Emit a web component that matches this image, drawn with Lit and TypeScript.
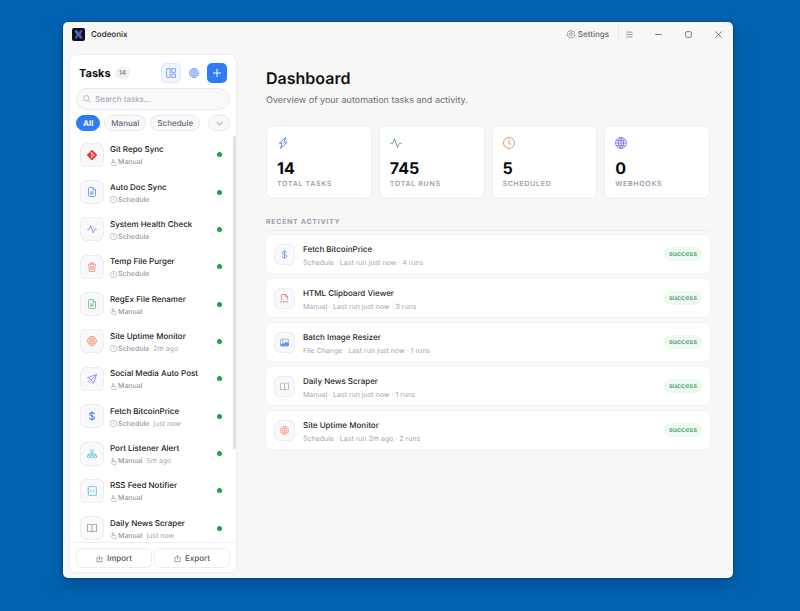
import { LitElement, html, svg, css, nothing } from "lit";
import { customElement, property, state } from "lit/decorators.js";
import { classMap } from "lit/directives/class-map.js";

interface Task {
  name: string;
  trigger: "Manual" | "Schedule";
  icon: string;
  tone: string;
  ago?: string;
}

interface Activity {
  name: string;
  detail: string;
  icon: string;
  tone: string;
}

const TASKS: Task[] = [
  { name: "Git Repo Sync", trigger: "Manual", icon: "git", tone: "red" },
  { name: "Auto Doc Sync", trigger: "Schedule", icon: "file", tone: "blue" },
  { name: "System Health Check", trigger: "Schedule", icon: "pulse", tone: "violet" },
  { name: "Temp File Purger", trigger: "Schedule", icon: "trash", tone: "rose" },
  { name: "RegEx File Renamer", trigger: "Manual", icon: "file", tone: "green" },
  { name: "Site Uptime Monitor", trigger: "Schedule", icon: "globe", tone: "orange", ago: "2m ago" },
  { name: "Social Media Auto Post", trigger: "Manual", icon: "send", tone: "violet" },
  { name: "Fetch BitcoinPrice", trigger: "Schedule", icon: "dollar", tone: "blue", ago: "just now" },
  { name: "Port Listener Alert", trigger: "Manual", icon: "network", tone: "cyan", ago: "5m ago" },
  { name: "RSS Feed Notifier", trigger: "Manual", icon: "journal", tone: "cyan" },
  { name: "Daily News Scraper", trigger: "Manual", icon: "book", tone: "gray", ago: "just now" },
];

const STATS = [
  { value: 14, label: "Total tasks", icon: "bolt", tone: "blue" },
  { value: 745, label: "Total runs", icon: "pulse", tone: "leaf" },
  { value: 5, label: "Scheduled", icon: "clock", tone: "copper" },
  { value: 0, label: "Webhooks", icon: "globe", tone: "purple" },
];

const ACTIVITY: Activity[] = [
  { name: "Fetch BitcoinPrice", detail: "Schedule · Last run just now · 4 runs", icon: "dollar", tone: "blue" },
  { name: "HTML Clipboard Viewer", detail: "Manual · Last run just now · 3 runs", icon: "html", tone: "red" },
  { name: "Batch Image Resizer", detail: "File Change · Last run just now · 1 runs", icon: "image", tone: "blue" },
  { name: "Daily News Scraper", detail: "Manual · Last run just now · 1 runs", icon: "book", tone: "gray" },
  { name: "Site Uptime Monitor", detail: "Schedule · Last run 2m ago · 2 runs", icon: "globe", tone: "orange" },
];

// all glyphs share a 16x16 grid
const GLYPHS: Record<string, unknown> = {
  git: svg`
    <path fill="currentColor" stroke="none" d="M7.1.2a1.3 1.3 0 0 1 1.8 0l6.9 6.9a1.3 1.3 0 0 1 0 1.8l-6.9 6.9a1.3 1.3 0 0 1-1.8 0L.2 8.9a1.3 1.3 0 0 1 0-1.8z"/>
    <path stroke="#fff" stroke-width="1.1" d="M5.4 2.8 7.8 5.2v6M7.8 5.4l2.8 2.8"/>
    <circle cx="7.8" cy="5.2" r="1.1" fill="#fff" stroke="none"/>
    <circle cx="7.8" cy="11.2" r="1.2" fill="#fff" stroke="none"/>
    <circle cx="10.8" cy="8.2" r="1.2" fill="#fff" stroke="none"/>`,
  file: svg`<path d="M9.5.8H4A1.5 1.5 0 0 0 2.5 2.3v11.4A1.5 1.5 0 0 0 4 15.2h8a1.5 1.5 0 0 0 1.5-1.5V4.8zM9.5.8v4h4M5.2 8h5.6M5.2 10h5.6M5.2 12h3"/>`,
  pulse: svg`<path d="M.6 8.5h3L6 2.5l4 11.5 2.4-5.5h3"/>`,
  trash: svg`<path d="M1.5 3.5h13M5.5 3.2V1.5h5v1.7M2.8 3.6l.9 11.6h8.6l.9-11.6M5.8 6l.3 6.8M8 6v6.8M10.2 6l-.3 6.8"/>`,
  globe: svg`<g stroke-width="1"><circle cx="8" cy="8" r="7.3"/><ellipse cx="8" cy="8" rx="3.4" ry="7.3"/><path d="M8 .7v14.6M.7 8h14.6M1.7 4.6h12.6M1.7 11.4h12.6"/></g>`,
  send: svg`<path d="M15.3.7 10.4 15 6.6 9.4.9 5.6zM15.3.7 6.6 9.4M3.6 10.2 1 12.8M5.8 12l-2.4 2.6"/>`,
  dollar: svg`<path stroke-width="1.7" d="M12 4.9C11.7 3.3 10.2 2.6 8.1 2.6 5.7 2.6 4.2 3.7 4.2 5.3c0 1.7 1.5 2.2 3.8 2.7 2.5.5 4.1 1.1 4.1 2.9 0 1.7-1.5 2.7-4 2.7-2.3 0-3.9-.9-4.2-2.7M8 .6v14.8"/>`,
  network: svg`<path d="M8 5.5V8M2.5 10V8h11v2M8 8v2"/><rect x="6" y="1.5" width="4" height="4" rx="1"/><rect x=".8" y="10" width="3.8" height="3.8" rx="1"/><rect x="6.1" y="10" width="3.8" height="3.8" rx="1"/><rect x="11.4" y="10" width="3.8" height="3.8" rx="1"/>`,
  journal: svg`<rect x="2.2" y="1" width="12.8" height="14" rx="1"/><path d="M.8 4.5H3M.8 8H3M.8 11.5H3M7.4 6 5.6 8l1.8 2M10 6l1.8 2L10 10"/>`,
  book: svg`<path d="M8 3.3C6.5 2 3.5 1.8.8 2.6v11c2.7-.7 5.7-.5 7.2.7 1.5-1.2 4.5-1.4 7.2-.7v-11C12.5 1.8 9.5 2 8 3.3zv11"/>`,
  bolt: svg`<path d="M11.5.6 3 8.4h4L4.5 15.4 13.5 7h-4.3z"/>`,
  clock: svg`<circle cx="8" cy="8" r="7.3"/><path d="M8 3.5v5l3 1.8"/>`,
  html: svg`<path d="M2.5 10.5V2.3A1.5 1.5 0 0 1 4 .8h5.5l4 4v5.7M9.5.8v4h4"/><path stroke-width=".7" d="M1 12.5v2.8M1 13.9h2.4M3.4 12.5v2.8M4.8 12.7h2.6M6.1 12.7v2.6M8.8 15.3v-2.8l1.3 1.6 1.3-1.6v2.8M13 12.5v2.7h2"/>`,
  image: svg`<rect x=".8" y="2" width="14.4" height="12" rx="1.5"/><circle cx="4.8" cy="5.6" r="1.4" fill="currentColor" stroke="none"/><path fill="currentColor" d="M1 12.5 5 9l2.5 1.7L11 6.8l4.2 3v3.4a.8.8 0 0 1-.8.8H1.6z"/>`,
  hand: svg`<path d="M5.5 9.5V2a1.2 1.2 0 0 1 2.4 0v5.2l5 .9a1.6 1.6 0 0 1 1.3 1.8l-.8 5.3H6.6L2.3 9.8c.7-1 2-.9 2.7-.1zM10.3 7.6v2M7.9 7.2v2"/>`,
  search: svg`<circle cx="6.5" cy="6.5" r="5.3"/><path d="m10.5 10.5 4.7 4.7"/>`,
  layout: svg`<rect x="1" y="1" width="5.6" height="14"/><rect x="9.4" y="1" width="5.6" height="6"/><rect x="9.4" y="9.8" width="5.6" height="5.2"/>`,
  plus: svg`<path stroke-width="1.6" d="M8 1.5v13M1.5 8h13"/>`,
  chevron: svg`<path stroke-width="1.8" d="m1.5 5 6.5 6 6.5-6"/>`,
  gear: svg`<path d="m6.6.9 2.8 0 .5 1.8 1.8.8 1.7-.8 1.8 2.2-1 1.6.3 1.9 1.3 1.1-.9 2.5-1.9.1-1.3 1.3-.3 1.8H4.6l-.4-1.8-1.3-1.3-1.9-.1-.6-2.5 1.2-1.1.2-1.9-.9-1.6 1.7-2.2 1.7.8 1.8-.8z"/><circle cx="8" cy="8.2" r="2.8"/>`,
  menu: svg`<path stroke-width="1.5" d="M.8 2.5h14.4M.8 8h14.4M.8 13.5h14.4"/>`,
  minimize: svg`<path stroke-width="1.8" d="M.5 8h15"/>`,
  maximize: svg`<rect x="1.5" y="1.5" width="13" height="13" rx="2" stroke-width="1.6"/>`,
  close: svg`<path stroke-width="1.8" d="m1 1 14 14M15 1 1 15"/>`,
  download: svg`<path d="M5 5.5H2v9.7h12V5.5h-3M8 .8v9.7M5.2 7.8 8 10.6l2.8-2.8"/>`,
  upload: svg`<path d="M5 5.5H2v9.7h12V5.5h-3M8 10.5V1M5.2 3.7 8 .9l2.8 2.8"/>`,
};

@customElement("ui-icon")
class UiIcon extends LitElement {
  @property() name = "";

  static styles = css`
    :host {
      display: inline-flex;
      flex: none;
      width: 10px;
      height: 10px;
    }
    svg {
      width: 100%;
      height: 100%;
      fill: none;
      stroke: currentColor;
      stroke-width: 1.2;
      stroke-linejoin: round;
      overflow: visible;
    }
  `;

  render() {
    return html`<svg viewBox="0 0 16 16" aria-hidden="true">${GLYPHS[this.name] ?? nothing}</svg>`;
  }
}

const base = css`
  * {
    box-sizing: border-box;
  }
  h1,
  h2,
  h3,
  p,
  ul {
    margin: 0;
    padding: 0;
    list-style: none;
  }
  button {
    display: flex;
    align-items: center;
    justify-content: center;
    margin: 0;
    padding: 0;
    border: 0;
    background: none;
    color: inherit;
    font: inherit;
    text-rendering: inherit;
    cursor: pointer;
  }
  .tile {
    display: flex;
    flex: none;
    align-items: center;
    justify-content: center;
    border: 1px solid #ededf2;
    border-radius: 6px;
    background: #f9f9fb;
  }
  .red { color: #e5383b; }
  .blue { color: #4f83f1; }
  .violet { color: #8b6cf0; }
  .purple { color: #7c5cf0; }
  .rose { color: #ee7c7c; }
  .green { color: #4cba6c; }
  .leaf { color: #55a573; }
  .orange { color: #f58a5c; }
  .copper { color: #d98a66; }
  .cyan { color: #4fb8d8; }
  .gray { color: #8d8f9c; }
`;

@customElement("title-bar")
class TitleBar extends LitElement {
  static styles = [
    base,
    css`
      :host {
        display: flex;
        align-items: center;
        height: 24px;
        padding-left: 9px;
        color: #666874;
      }
      .logo {
        width: 13px;
        height: 13px;
      }
      .name {
        flex: 1;
        margin-left: 6px;
        color: #222;
        font-weight: 500;
      }
      .settings {
        gap: 3px;
        padding: 0 9px;
        font-weight: 500;
      }
      .settings ui-icon {
        width: 8px;
        height: 8px;
      }
      .divider {
        width: 1px;
        height: 16px;
        background: #e6e6e6;
      }
      .menu {
        width: 20px;
        height: 22px;
        margin-right: 4px;
      }
      .control {
        width: 30px;
        height: 22px;
        color: #555;
      }
      .menu ui-icon,
      .control ui-icon {
        width: 7px;
        height: 7px;
      }
    `,
  ];

  render() {
    return html`
      <svg class="logo" viewBox="0 0 26 26" aria-hidden="true">
        <rect width="26" height="26" rx="4" fill="#0b1024" />
        <path d="M5 5h5l3 5 3-5h5l-4 8 4 8h-5l-3-5-3 5H5l4-8z" fill="#40599c" />
        <path d="M16 5h5l-4 8 4 8h-5l-3-5z" fill="#5f55a0" />
        <path d="M5 5h5l4 7-4 2z" fill="#447cb4" />
      </svg>
      <span class="name">Codeonix</span>
      <button class="settings"><ui-icon name="gear"></ui-icon>Settings</button>
      <span class="divider"></span>
      <button class="menu" aria-label="Menu"><ui-icon name="menu"></ui-icon></button>
      ${["minimize", "maximize", "close"].map(
        (name) => html`
          <button class="control" aria-label=${name}><ui-icon name=${name}></ui-icon></button>
        `
      )}
    `;
  }
}

@customElement("task-sidebar")
class TaskSidebar extends LitElement {
  @state() private filter = "All";

  static styles = [
    base,
    css`
      :host {
        display: flex;
        flex-direction: column;
        box-sizing: border-box;
        min-height: 0;
        border: 1px solid #f0f0f0;
        border-radius: 8px;
        background: #fff;
        overflow: hidden;
      }
      .head {
        display: flex;
        align-items: center;
        padding: 8px 9px 0;
      }
      h2 {
        color: #111;
        font-size: 11px;
        line-height: 20px;
        font-weight: 700;
      }
      .count {
        margin: 0 auto 0 4px;
        padding: 0 4px;
        border-radius: 6px;
        background: #f1f1f4;
        color: #8e909e;
        font-size: 7px;
        line-height: 12px;
        font-weight: 600;
      }
      .tool {
        width: 20px;
        height: 20px;
        margin-left: 3px;
        border-radius: 5px;
        color: #5b84ee;
      }
      .tool.active {
        border: 1px solid #dbe8fd;
        background: #f0f6ff;
      }
      .tool.add {
        background: #2f7bf6;
        color: #fff;
      }
      .search {
        display: flex;
        align-items: center;
        gap: 4px;
        height: 22px;
        margin: 5px 6px;
        padding: 0 6px;
        border: 1px solid #e9e9ee;
        border-radius: 11px;
        background: #f9f9fb;
        color: #9496a6;
      }
      .search ui-icon {
        width: 8px;
        height: 8px;
      }
      input {
        flex: 1;
        min-width: 0;
        padding: 0;
        border: 0;
        outline: 0;
        background: none;
        color: #222;
        font: inherit;
        text-rendering: inherit;
      }
      input::placeholder {
        color: #a0a1af;
      }
      .chips {
        display: flex;
        gap: 4px;
        padding: 0 6px;
      }
      .chip {
        height: 16px;
        padding: 0 6px;
        border: 1px solid #e9e9ee;
        border-radius: 8px;
        background: #f9f9fb;
        color: #666874;
        font-weight: 500;
      }
      .chip.active {
        border-color: #2f7bf6;
        background: #2f7bf6;
        color: #fff;
        font-weight: 700;
      }
      .chip.more {
        width: 22px;
        margin-left: auto;
      }
      .chip.more ui-icon {
        width: 7px;
        height: 7px;
      }
      .scroller {
        display: flex;
        flex: 1;
        min-height: 0;
        margin-top: 5px;
        overflow: hidden;
      }
      .scroller ul {
        display: grid;
        flex: 1;
        grid-auto-rows: 1fr;
        height: calc(100% + 5px);
      }
      .thumb {
        width: 3px;
        height: 77%;
        border-radius: 2px;
        background: #e2e2e2;
      }
      .task {
        display: flex;
        align-items: center;
        padding: 0 11px 0 10px;
      }
      .tile {
        width: 24px;
        height: 24px;
        margin-right: 6px;
      }
      .text {
        flex: 1;
        padding-top: 2px;
      }
      h3 {
        color: #17181c;
        font-size: 8px;
        line-height: 12px;
        font-weight: 500;
        white-space: nowrap;
      }
      .meta {
        display: flex;
        align-items: center;
        gap: 1px;
        margin-top: 1px;
        color: #9496a6;
        font-size: 7px;
        line-height: 12px;
        font-weight: 500;
      }
      .meta ui-icon {
        width: 7px;
        height: 7px;
      }
      .ago {
        margin-left: 3px;
        color: #a6a7b4;
        font-weight: 400;
      }
      .dot {
        width: 5px;
        height: 5px;
        border-radius: 50%;
        background: #17a34a;
      }
      .foot {
        display: flex;
        gap: 2px;
        padding: 5px 6px 4px;
        border-top: 1px solid #efefef;
      }
      .foot button {
        flex: 1;
        gap: 4px;
        height: 20px;
        border: 1px solid #ededf0;
        border-radius: 6px;
        color: #555764;
        font-weight: 500;
      }
      .foot ui-icon {
        width: 7px;
        height: 7px;
      }
    `,
  ];

  render() {
    return html`
      <div class="head">
        <h2>Tasks</h2>
        <span class="count">14</span>
        <button class="tool active" aria-label="Board"><ui-icon name="layout"></ui-icon></button>
        <button class="tool" aria-label="Webhooks"><ui-icon name="globe"></ui-icon></button>
        <button class="tool add" aria-label="Add task"><ui-icon name="plus"></ui-icon></button>
      </div>
      <label class="search">
        <ui-icon name="search"></ui-icon>
        <input type="text" placeholder="Search tasks..." aria-label="Search tasks" />
      </label>
      <div class="chips">
        ${["All", "Manual", "Schedule"].map(
          (name) => html`
            <button
              class=${classMap({ chip: true, active: this.filter === name })}
              @click=${() => (this.filter = name)}
            >
              ${name}
            </button>
          `
        )}
        <button class="chip more" aria-label="More filters"><ui-icon name="chevron"></ui-icon></button>
      </div>
      <div class="scroller">
        <ul>
          ${TASKS.filter((t) => this.filter === "All" || t.trigger === this.filter).map(
            (t) => html`
              <li class="task">
                <span class="tile ${t.tone}"><ui-icon name=${t.icon}></ui-icon></span>
                <div class="text">
                  <h3>${t.name}</h3>
                  <p class="meta">
                    <ui-icon name=${t.trigger === "Manual" ? "hand" : "clock"}></ui-icon>
                    <span>${t.trigger}</span>
                    ${t.ago ? html`<span class="ago">${t.ago}</span>` : nothing}
                  </p>
                </div>
                <span class="dot"></span>
              </li>
            `
          )}
        </ul>
        <span class="thumb"></span>
      </div>
      <div class="foot">
        <button><ui-icon name="download"></ui-icon>Import</button>
        <button><ui-icon name="upload"></ui-icon>Export</button>
      </div>
    `;
  }
}

@customElement("dashboard-view")
class DashboardView extends LitElement {
  static styles = [
    base,
    css`
      :host {
        display: block;
        padding: 14px 23px 0 29px;
      }
      h1 {
        color: #111;
        font-size: 16px;
        line-height: 20px;
        font-weight: 600;
      }
      .lead {
        margin-top: 7px;
        color: #6c6e7b;
        font-size: 9px;
        line-height: 12px;
      }
      .stats {
        display: grid;
        grid-template-columns: repeat(4, 1fr);
        gap: 7px;
        margin-top: 18px;
      }
      .stat {
        padding: 11px 10px 9px;
        border: 1px solid #ededed;
        border-radius: 7px;
        background: #fff;
      }
      .stat ui-icon {
        display: flex;
        width: 12px;
        height: 12px;
      }
      .value {
        margin-top: 9px;
        color: #0c0c0e;
        font-size: 16px;
        line-height: 20px;
        font-weight: 700;
      }
      .label,
      h2 {
        color: #9d9eac;
        font-size: 7px;
        line-height: 10px;
        font-weight: 600;
        letter-spacing: 0.1em;
        text-transform: uppercase;
      }
      .label {
        margin-top: 1px;
      }
      h2 {
        margin-top: 18px;
        padding-bottom: 3px;
        border-bottom: 1px solid #ededed;
        font-weight: 700;
      }
      .runs {
        display: flex;
        flex-direction: column;
        gap: 6px;
        margin-top: 4px;
      }
      .run {
        display: flex;
        align-items: center;
        gap: 8px;
        height: 38px;
        padding: 0 8px;
        border-radius: 5px;
        background: #fff;
        box-shadow: 0 0 1px #ddd;
      }
      .tile {
        width: 21px;
        height: 21px;
      }
      .tile ui-icon {
        width: 9px;
        height: 9px;
        opacity: 0.85;
      }
      .text {
        flex: 1;
        padding-top: 3px;
      }
      h3 {
        color: #26272c;
        font-size: 8px;
        line-height: 12px;
        font-weight: 500;
      }
      .detail {
        margin-top: 2px;
        color: #a4a5b1;
        font-size: 7px;
        line-height: 12px;
      }
      .status {
        padding: 0 5px;
        border-radius: 7px;
        background: #eef9f2;
        color: #4c9f69;
        font-size: 7px;
        line-height: 14px;
        font-weight: 600;
      }
    `,
  ];

  render() {
    return html`
      <h1>Dashboard</h1>
      <p class="lead">Overview of your automation tasks and activity.</p>
      <div class="stats">
        ${STATS.map(
          (s) => html`
            <div class="stat">
              <ui-icon class=${s.tone} name=${s.icon}></ui-icon>
              <p class="value">${s.value}</p>
              <p class="label">${s.label}</p>
            </div>
          `
        )}
      </div>
      <h2>Recent activity</h2>
      <ul class="runs">
        ${ACTIVITY.map(
          (a) => html`
            <li class="run">
              <span class="tile ${a.tone}"><ui-icon name=${a.icon}></ui-icon></span>
              <div class="text">
                <h3>${a.name}</h3>
                <p class="detail">${a.detail}</p>
              </div>
              <span class="status">success</span>
            </li>
          `
        )}
      </ul>
    `;
  }
}

@customElement("app-root")
class AppRoot extends LitElement {
  static styles = css`
    :host {
      display: flex;
      box-sizing: border-box;
      height: 100vh;
      padding: 22px 67px 33px 63px;
      background: #0063b1;
      font: 8px/12px Inter, "Liberation Sans", sans-serif;
      text-rendering: geometricPrecision;
    }
    .window {
      display: flex;
      flex: 1;
      flex-direction: column;
      min-width: 0;
      border-radius: 5px;
      background: #f7f7f5;
      box-shadow: 0 0 1px 1px rgba(20, 50, 90, 0.4), 0 6px 16px rgba(0, 20, 60, 0.3);
      overflow: hidden;
    }
    .body {
      display: flex;
      flex: 1;
      min-height: 0;
      padding: 8px 0 5px 6px;
    }
    task-sidebar {
      flex: 0 0 168px;
    }
    dashboard-view {
      flex: 1;
    }
  `;

  render() {
    return html`
      <div class="window">
        <title-bar></title-bar>
        <div class="body">
          <task-sidebar></task-sidebar>
          <dashboard-view></dashboard-view>
        </div>
      </div>
    `;
  }
}
